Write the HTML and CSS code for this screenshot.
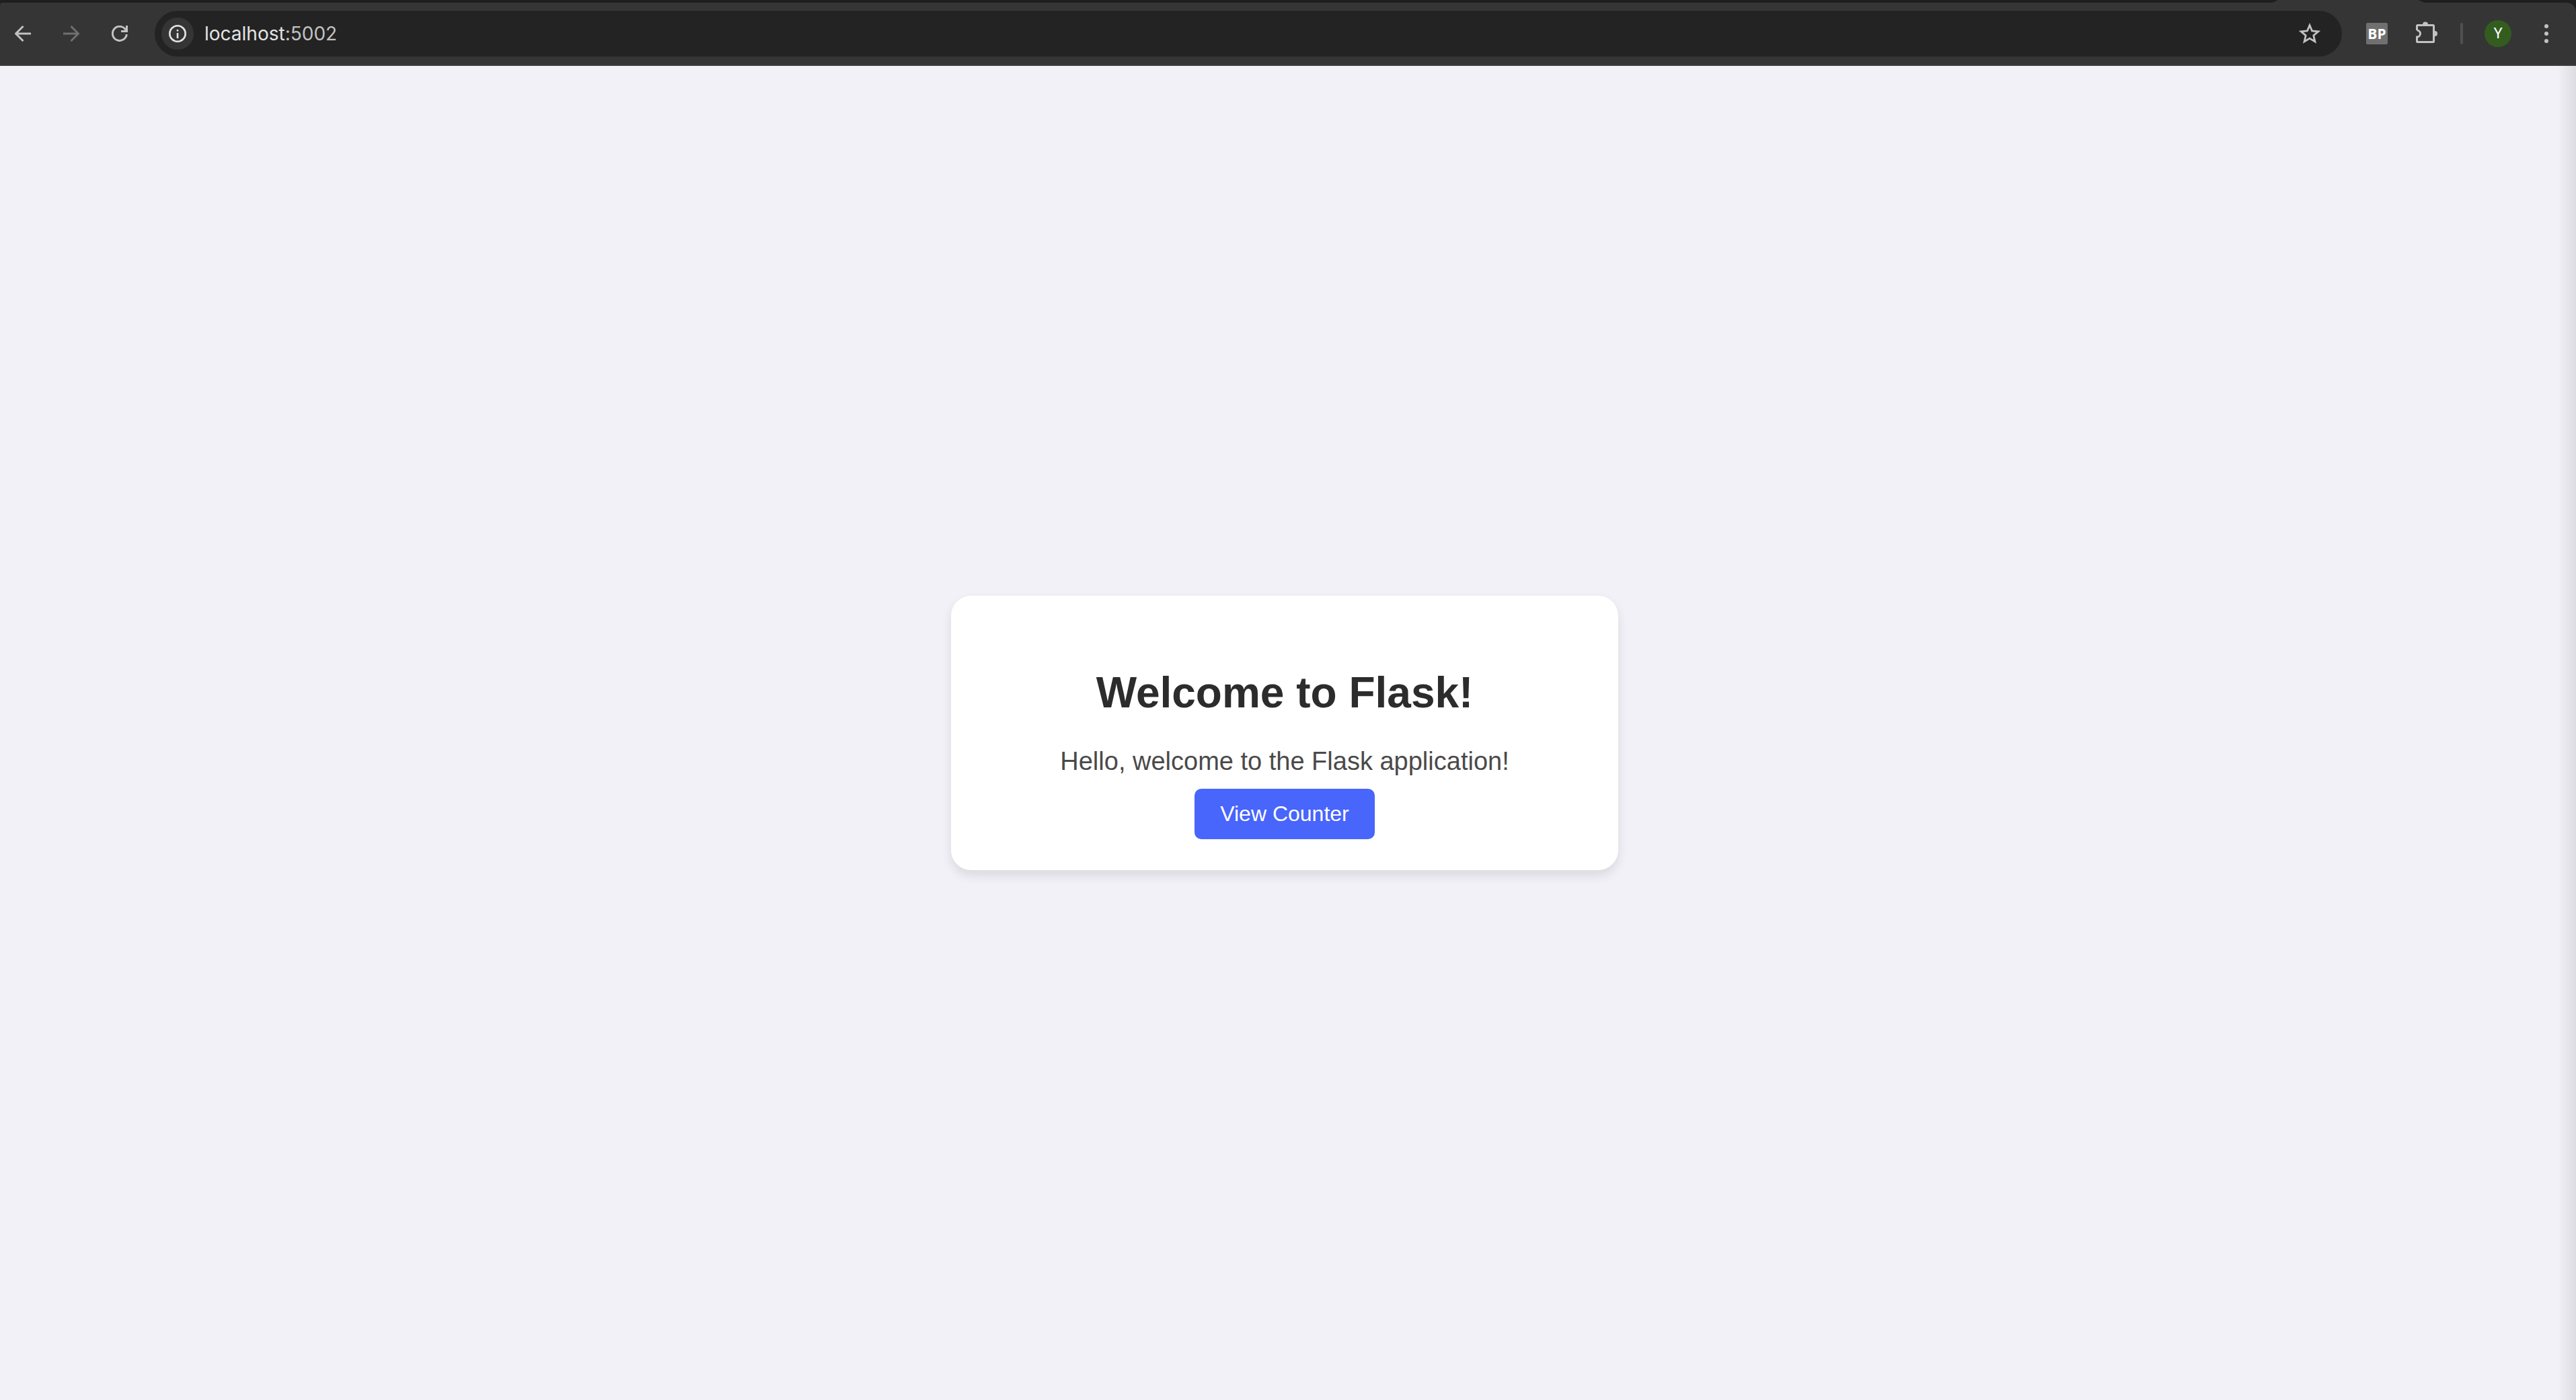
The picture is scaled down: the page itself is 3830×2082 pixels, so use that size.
FILE: index.html
```html
<!DOCTYPE html>
<html lang="en">
<head>
<meta charset="utf-8">
<title>Welcome to Flask!</title>
<link rel="stylesheet" href="styles.css">
</head>
<body>
<div class="tabstrip"><svg viewBox="0 0 236 4" width="236" height="4"><path d="M0 4Q8 4 12 0H222Q227 4 236 4z" fill="currentColor"/></svg></div>
<header class="toolbar">
  <nav class="nav">
    <button class="icon-btn" aria-label="Back"><svg viewBox="0 0 24 24" width="24" height="24"><path d="M24 12H2M12.500 1L1.500 12l11 11" fill="none" stroke="currentColor" stroke-width="3"/></svg></button>
    <button class="icon-btn" aria-label="Forward" disabled><svg viewBox="0 0 24 24" width="24" height="24"><path d="M0 12h22M11.500 1l11 11-11 11" fill="none" stroke="currentColor" stroke-width="3"/></svg></button>
    <button class="icon-btn" aria-label="Reload"><svg viewBox="0 0 24 24" width="24" height="24"><path d="M22.300 13A10.500 10.500 0 1 1 20 5.200L22 8" fill="none" stroke="currentColor" stroke-width="3"/><path d="M24 0v10H14V7h7V0z" fill="currentColor"/></svg></button>
  </nav>
  <form class="omnibox">
    <button type="button" class="site-info" aria-label="View site information"><svg viewBox="0 0 26 26" width="26" height="26"><circle cx="13" cy="13" r="11.700" fill="none" stroke="currentColor" stroke-width="2.600"/><path d="M11.700 12h2.600V20h-2.600zM11.700 7h2.600v2.600h-2.600z" fill="currentColor"/></svg></button>
    <div class="url" role="textbox" aria-label="Address"><span>localhost</span><span class="port">:5002</span></div>
    <button type="button" class="icon-btn" aria-label="Bookmark this page"><svg viewBox="0 0 32 32" width="32" height="32"><path d="M16 3.500l3.600 8.500 9.200.8-7 6 2.100 9L16 23.100 8.100 27.800l2.100-9-7-6 9.200-.8z" fill="none" stroke="currentColor" stroke-width="2.800"/></svg></button>
  </form>
  <div class="actions">
    <button class="icon-btn" aria-label="BP extension"><span class="bp">BP</span></button>
    <button class="icon-btn" aria-label="Extensions"><svg viewBox="-4 0 36 36" width="36" height="36"><path d="M1.500 13V6.500a1 1 0 0 1 1-1h23a1 1 0 0 1 1 1V29.500a1 1 0 0 1-1 1H2.500a1 1 0 0 1-1-1V23a5 5 0 0 0 0-10" fill="none" stroke="currentColor" stroke-width="3"/><path d="M10 4.500a4 4 0 0 1 8 0zM28 14a4 4 0 0 1 0 8z" fill="currentColor"/></svg></button>
    <span class="divider"></span>
    <button class="avatar" aria-label="Profile">Y</button>
    <button class="icon-btn" aria-label="Menu"><svg viewBox="0 0 8 28" width="8" height="28"><g fill="currentColor"><circle cx="4" cy="3" r="3"/><circle cx="4" cy="14" r="3"/><circle cx="4" cy="25" r="3"/></g></svg></button>
  </div>
</header>
<main class="page">
  <section class="card">
    <h1>Welcome to Flask!</h1>
    <p>Hello, welcome to the Flask application!</p>
    <a class="button" href="/counter">View Counter</a>
  </section>
</main>
</body>
</html>
```
FILE: styles.css
```css
* { box-sizing: border-box; }

body {
  margin: 0;
  min-height: 100vh;
  display: flex;
  flex-direction: column;
  background: #1e1e1e;
  font-family: "Liberation Sans", Arial, sans-serif;
}

button {
  padding: 0;
  border: 0;
  background: none;
  font: inherit;
}

svg { display: block; }

.tabstrip {
  height: 4px;
  display: flex;
  justify-content: flex-end;
  padding-right: 220px;
  color: #353535;
}

.toolbar {
  height: 94px;
  display: flex;
  align-items: center;
  padding-right: 8px;
  background: #353535;
  border-bottom: 2px solid #3c3c3c;
  border-radius: 4px 14px 0 0;
}

.nav,
.actions {
  display: flex;
  align-items: center;
}

.icon-btn {
  width: 72px;
  height: 68px;
  display: flex;
  align-items: center;
  justify-content: center;
  color: #c2c2c2;
}

.icon-btn:disabled { color: #707070; }

.nav { margin-left: -2px; padding-right: 16px; }

.omnibox {
  flex: 1;
  height: 68px;
  display: flex;
  align-items: center;
  margin-right: 16px;
  padding: 0 12px 0 10px;
  border-radius: 34px;
  background: #232323;
}

.site-info {
  width: 48px;
  height: 48px;
  display: flex;
  align-items: center;
  justify-content: center;
  border-radius: 50%;
  background: #353535;
  color: #e3e3e3;
}

.url {
  flex: 1;
  padding-left: 16px;
  color: #e3e3e3;
  font-family: Inter, sans-serif;
  font-size: 28px;
}

.port { color: #c2c2c2; }

.bp {
  width: 32px;
  height: 32px;
  border-radius: 2px;
  background: #707070;
  color: #fff;
  font: bold 21px/32px "Open Sans", sans-serif;
}

.divider {
  width: 4px;
  height: 32px;
  margin: 0 16px;
  border-radius: 2px;
  background: #505050;
}

.avatar {
  width: 40px;
  height: 40px;
  margin: 0 16px;
  border-radius: 50%;
  background: #335d1e;
  color: #fff;
  font: 22px/40px Roboto, sans-serif;
}

.page {
  flex: 1;
  display: flex;
  align-items: center;
  justify-content: center;
  padding-right: 10px;
  background: linear-gradient(to left, #dddce1, #f2f1f7 28px);
}

.card {
  width: 992px;
  max-width: 100%;
  padding: 108px 48px 46px;
  border-radius: 30px;
  background: #fff;
  box-shadow: 0 8px 16px rgba(0, 0, 0, 0.1);
  text-align: center;
}

.card h1 {
  margin: 0 0 42px;
  color: #2c2c2c;
  font-size: 64px;
  line-height: 72px;
}

.card p {
  margin: 0 0 17px;
  color: #4a4a4a;
  font-size: 38px;
  line-height: 48px;
}

.button {
  display: inline-block;
  vertical-align: top;
  padding: 0 38px;
  border-radius: 10px;
  background: #4865fc;
  color: #fff;
  font-size: 32px;
  line-height: 75px;
  text-decoration: none;
}
```
